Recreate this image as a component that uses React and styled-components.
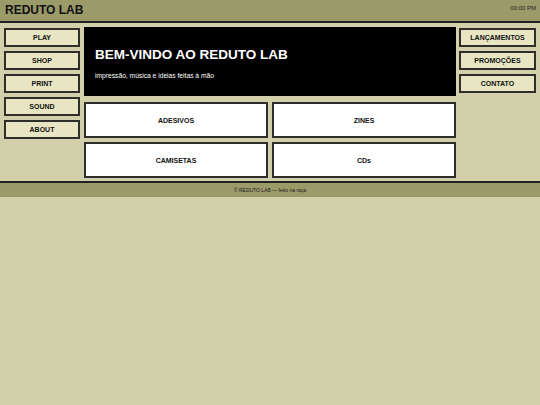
import styled, { createGlobalStyle } from 'styled-components';

const GlobalStyle = createGlobalStyle`
  html, body {
    margin: 0;
    padding: 0;
    background: #d1d0aa;
    font-family: "Liberation Sans", Arial, sans-serif;
    color: #111;
  }
  * { box-sizing: border-box; }
`;

const Header = styled.header`
  height: 23px;
  background: #9b9a69;
  border-bottom: 2px solid #222;
  display: flex;
  align-items: flex-start;
  justify-content: space-between;
  padding: 0 4px 0 5px;
`;

const Logo = styled.h1`
  margin: 3px 0 0;
  font-size: 12px;
  font-weight: bold;
  line-height: 15px;
  color: #111;
`;

const Clock = styled.span`
  margin-top: 5px;
  font-size: 6px;
  color: #222;
`;

const Layout = styled.div`
  display: grid;
  grid-template-columns: 77px 1fr 77px;
  gap: 4px 3px;
  padding: 4px 4px 3px;
`;

const SideNav = styled.nav`
  display: flex;
  flex-direction: column;
  gap: 4px;
  padding-top: 1px;
  padding-right: ${p => (p.$left ? '1px' : '0')};
`;

const NavButton = styled.button`
  height: 19px;
  width: 100%;
  background: #e7e5c2;
  border: 2px solid #2e2e2a;
  font-family: inherit;
  font-size: 7px;
  font-weight: bold;
  color: #111;
  cursor: pointer;
  padding: 0;
`;

const Main = styled.main`
  display: flex;
  flex-direction: column;
  gap: 6px;
`;

const Hero = styled.section`
  height: 69px;
  background: #000;
  color: #fff;
  padding: 19px 11px 0;
`;

const HeroTitle = styled.h2`
  margin: 0;
  font-size: 13.5px;
  line-height: 17px;
  font-weight: bold;
`;

const HeroText = styled.p`
  margin: 9px 0 0;
  font-size: 6.7px;
`;

const CardGrid = styled.div`
  display: grid;
  grid-template-columns: 1fr 1fr;
  gap: 4px;
`;

const Card = styled.div`
  height: 36px;
  background: #fff;
  border: 2px solid #2e2e2a;
  display: flex;
  align-items: center;
  justify-content: center;
  font-size: 7px;
  font-weight: bold;
`;

const Footer = styled.footer`
  height: 16px;
  background: #9b9a69;
  border-top: 2px solid #222;
  display: flex;
  align-items: center;
  justify-content: center;
  font-size: 5px;
  color: #222;
`;

const leftLinks = ['PLAY', 'SHOP', 'PRINT', 'SOUND', 'ABOUT'];
const rightLinks = ['LANÇAMENTOS', 'PROMOÇÕES', 'CONTATO'];
const cards = ['ADESIVOS', 'ZINES', 'CAMISETAS', 'CDs'];

export default function App() {
  return (
    <>
      <GlobalStyle />
      <Header>
        <Logo>REDUTO LAB</Logo>
        <Clock>00:00 PM</Clock>
      </Header>
      <Layout>
        <SideNav $left>
          {leftLinks.map(l => <NavButton key={l}>{l}</NavButton>)}
        </SideNav>
        <Main>
          <Hero>
            <HeroTitle>BEM-VINDO AO REDUTO LAB</HeroTitle>
            <HeroText>impressão, música e ideias feitas à mão</HeroText>
          </Hero>
          <CardGrid>
            {cards.map(c => <Card key={c}>{c}</Card>)}
          </CardGrid>
        </Main>
        <SideNav>
          {rightLinks.map(l => <NavButton key={l}>{l}</NavButton>)}
        </SideNav>
      </Layout>
      <Footer>© REDUTO LAB — feito na raça</Footer>
    </>
  );
}
